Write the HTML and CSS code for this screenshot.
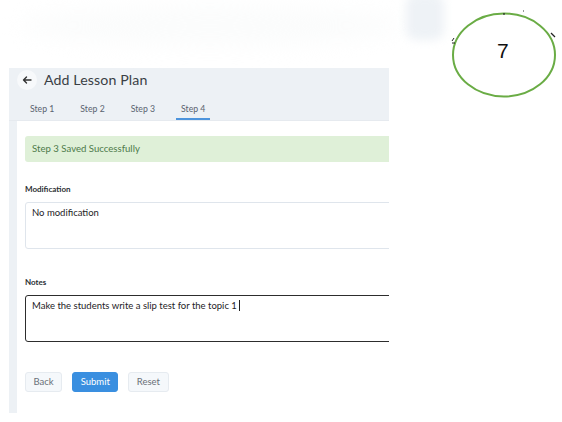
FILE: index.html
```html
<!DOCTYPE html>
<html>
<head>
<meta charset="utf-8">
<link rel="stylesheet" href="styles.css">
</head>
<body>
<div class="top">
  <div class="smudge smudge-a"></div>
  <div class="smudge smudge-b"></div>
  <div class="annot">
    <svg width="110" height="92" viewBox="0 0 110 92">
      <ellipse cx="54" cy="46" rx="51" ry="41.5" fill="none" stroke="#6aac45" stroke-width="2"/>
      <path d="M2 32 l2 -3 M2 34 l3 0" stroke="#222" stroke-width="1" fill="none"/>
      <path d="M101 24 l4 4" stroke="#222" stroke-width="1.2" fill="none"/>
      <path d="M54 4 l0 2" stroke="#222" stroke-width="1.2"/>
      <path d="M73 2 l1 0" stroke="#333" stroke-width="1"/>
    </svg>
    <span class="seven">7</span>
  </div>
</div>
<div class="panel">
  <div class="head">
    <div class="title-row">
      <span class="back-btn">
        <svg width="10" height="10" viewBox="0 0 10 10"><path d="M9 5H1.5M4.5 2L1.5 5l3 3" fill="none" stroke="#333" stroke-width="1.4" stroke-linecap="round" stroke-linejoin="round"/></svg>
      </span>
      <span class="title">Add Lesson Plan</span>
    </div>
    <div class="tabs">
      <span class="tab">Step 1</span>
      <span class="tab">Step 2</span>
      <span class="tab">Step 3</span>
      <span class="tab active">Step 4</span>
    </div>
  </div>
  <div class="body">
    <div class="alert">Step 3 Saved Successfully</div>
    <div class="label label-mod">Modification</div>
    <div class="field">No modification</div>
    <div class="label label-notes">Notes</div>
    <div class="field focused">Make the students write a slip test for the topic 1<span class="caret"></span></div>
    <div class="actions">
      <span class="btn">Back</span>
      <span class="btn primary">Submit</span>
      <span class="btn">Reset</span>
    </div>
  </div>
</div>
</body>
</html>
```
FILE: styles.css
```css
* { box-sizing: border-box; }
html, body { margin: 0; padding: 0; background: #fff; }
body { width: 562px; height: 422px; overflow: hidden; font-family: Lato, "Open Sans", sans-serif; color: #333; }

.top { height: 68px; position: relative; }
.smudge { position: absolute; }
.smudge-a { left: 20px; top: 6px; width: 380px; height: 40px; background: #fbfcfc; border-radius: 50%; filter: blur(10px); }
.smudge-b { left: 406px; top: -6px; width: 38px; height: 46px; background: #eef2f6; border-radius: 10px; filter: blur(5px); }
.annot { position: absolute; left: 450px; top: 9px; width: 110px; height: 92px; }
.annot svg { position: absolute; left: 0; top: 0; }
.seven { position: absolute; left: 47px; top: 31px; font-family: "Liberation Sans", Arial, sans-serif; font-size: 21px; color: #111; line-height: 21px; }

.panel { margin-left: 9px; width: 380px; background: #edf1f5; overflow: hidden; padding-left: 8px; height: 345px; }
.head { height: 53px; margin-left: -8px; padding-left: 8px; border-bottom: 1px solid #e6eaef; }
.title-row { display: flex; align-items: center; height: 22px; padding-top: 1px; }
.back-btn { width: 20px; height: 20px; border-radius: 50%; background: #f7f9fb; display: flex; align-items: center; justify-content: center; }
.title { margin-left: 7px; font-size: 14.2px; color: #3a3f45; letter-spacing: 0.1px; }
.tabs { display: flex; gap: 16px; margin-top: 8px; padding-left: 8px; }
.tab { padding: 0 5px; height: 22px; line-height: 22px; font-size: 8.7px; color: #5a6470; border-bottom: 2px solid transparent; }
.tab.active { border-bottom-color: #4d94dc; }

.body { background: #fff; height: 292px; padding: 15px 0 0 8px; }
.alert { width: 500px; height: 26px; background: #dff0d8; color: #4d7a4a; font-size: 9.6px; line-height: 26px; padding-left: 7px; border-radius: 3px; }
.label { font-size: 8px; line-height: 10px; font-weight: 700; color: #2b2f33; }
.label-mod { margin-top: 22px; }
.label-notes { margin-top: 28px; }
.field { margin-top: 8px; width: 500px; height: 47px; border: 1px solid #dfe5ec; border-radius: 3px; font-size: 9.5px; color: #1e2226; padding: 4px 6px; line-height: 12px; }
.field.focused { border-color: #2d2d2d; }
.caret { display: inline-block; width: 1px; height: 11px; background: #222; margin-left: 2px; vertical-align: -2px; }
.actions { display: flex; gap: 10px; margin-top: 30px; }
.btn { height: 20px; line-height: 18px; padding: 0 7.5px; font-size: 9.5px; color: #6a7078; background: #f5f8fb; border: 1px solid #e6ebf0; border-radius: 3px; }
.btn.primary { background: #3a8fe0; border-color: #3a8fe0; color: #fff; }
```
